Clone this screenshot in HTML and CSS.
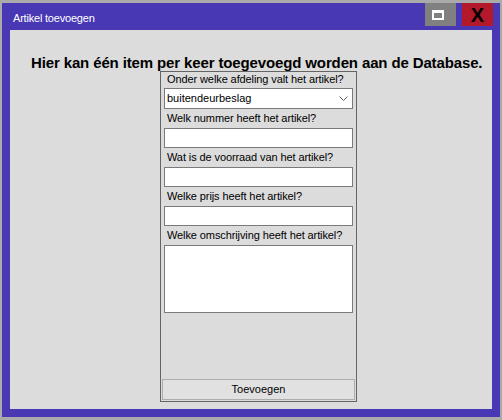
FILE: index.html
```html
<!DOCTYPE html>
<html lang="nl">
<head>
<meta charset="utf-8">
<title>Artikel toevoegen</title>
<link rel="stylesheet" href="styles.css">
</head>
<body>
<div class="window">
  <div class="titlebar">
    <span class="title">Artikel toevoegen</span>
    <div class="controls">
      <div class="btn-max">
        <svg width="12" height="10" viewBox="0 0 12 10"><path d="M0 0H12V10H0Z M2 3V8H10V3Z" fill="#ffffff" fill-rule="evenodd"/></svg>
      </div>
      <div class="btn-close">X</div>
    </div>
  </div>
  <div class="content">
    <div class="heading">Hier kan één item per keer toegevoegd worden aan de Database.</div>
    <div class="group">
      <div class="label first">Onder welke afdeling valt het artikel?</div>
      <div class="select">
        <span>buitendeurbeslag</span>
        <svg width="9" height="5" viewBox="0 0 9 5"><polyline points="0.5,0.5 4.5,4.5 8.5,0.5" fill="none" stroke="#606060" stroke-width="1"/></svg>
      </div>
      <div class="label">Welk nummer heeft het artikel?</div>
      <div class="field"></div>
      <div class="label">Wat is de voorraad van het artikel?</div>
      <div class="field"></div>
      <div class="label">Welke prijs heeft het artikel?</div>
      <div class="field"></div>
      <div class="label">Welke omschrijving heeft het artikel?</div>
      <div class="field area"></div>
      <div class="submit">Toevoegen</div>
    </div>
  </div>
</div>
</body>
</html>
```

FILE: styles.css
```css
* { box-sizing: border-box; }
html, body {
  margin: 0;
  padding: 0;
  background: #aaaaaa;
  width: 502px;
  height: 420px;
  overflow: hidden;
  font-family: "Liberation Sans", Arial, sans-serif;
}
.window {
  margin: 3px 2px 0 2px;
  width: 498px;
  height: 414px;
  background: #4838b4;
  display: flex;
  flex-direction: column;
}
.titlebar {
  height: 27px;
  display: flex;
  justify-content: space-between;
  align-items: flex-start;
  padding-left: 11px;
  padding-right: 7px;
}
.title {
  color: #ffffff;
  font-size: 11px;
  letter-spacing: -0.2px;
  line-height: 14px;
  margin-top: 8px;
}
.controls {
  display: flex;
  gap: 6px;
}
.btn-max {
  width: 31px;
  height: 23px;
  background: #808080;
  display: flex;
  padding-left: 7px;
  padding-top: 7px;
}
.btn-close {
  width: 31px;
  height: 23px;
  background: #b4182b;
  color: #000000;
  font-weight: bold;
  font-size: 20px;
  line-height: 23px;
  text-align: center;
  padding-top: 1px;
}
.content {
  margin: 0 8px 8px 8px;
  height: 379px;
  background: #dcdcdc;
  display: flex;
  flex-direction: column;
}
.heading {
  margin-top: 24px;
  padding-left: 21px;
  font-weight: bold;
  font-size: 15px;
  letter-spacing: -0.13px;
  line-height: 17px;
  height: 17px;
  white-space: nowrap;
  color: #000000;
}
.group {
  margin-left: 150px;
  width: 197px;
  height: 331px;
  border: 1px solid #646464;
  display: flex;
  flex-direction: column;
}
.label {
  font-size: 11px;
  letter-spacing: -0.1px;
  line-height: 19px;
  height: 19px;
  padding-left: 6px;
  color: #000000;
  white-space: nowrap;
}
.label.first {
  line-height: 15px;
  height: 15px;
  margin-bottom: 1px;
}
.select {
  margin: 0 3px;
  height: 21px;
  border: 1px solid #7a7a7a;
  background: #ffffff;
  display: flex;
  justify-content: space-between;
  align-items: center;
  padding: 0 4px 2px 2px;
  font-size: 11px;
  color: #000000;
}
.select svg { margin-top: 1px; }
.field {
  margin: 0 3px;
  height: 20px;
  border: 1px solid #7a7a7a;
  background: #ffffff;
}
.field.area {
  height: 68px;
}
.submit {
  margin: auto 1px 1px 1px;
  height: 21px;
  background: #e1e1e1;
  border: 1px solid #adadad;
  font-size: 11px;
  line-height: 19px;
  text-align: center;
  color: #000000;
}
```
